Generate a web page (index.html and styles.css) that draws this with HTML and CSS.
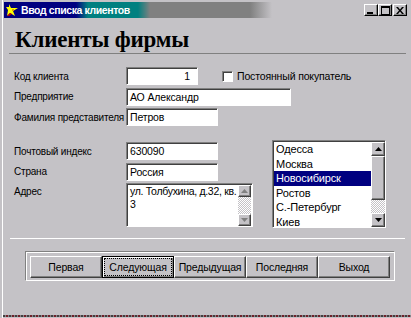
FILE: index.html
```html
<!DOCTYPE html>
<html lang="ru">
<head>
    <meta charset="UTF-8">
    <title>Ввод списка клиентов</title>
    <link rel="stylesheet" href="styles.css">
</head>
<body>
<div class="window">

    <!-- Title bar -->
    <div class="titlebar">
        <svg class="app-icon" width="13" height="13" viewBox="0 0 13 13">
            <polygon points="3,0 5,4 12,4 7,7 9,12 4,9 1,12 2,6 0,3 3,3" fill="#ffff00"/>
            <polygon points="1,12 4,9 6,10 3,12" fill="#c00000"/>
            <rect x="6" y="5" width="2" height="2" fill="#e0a000"/>
        </svg>
        <span class="title">Ввод списка клиентов</span>
        <div class="win-buttons">
            <span class="wbtn">
                <svg width="8" height="8" viewBox="0 0 8 8"><rect x="0" y="6" width="6" height="2" fill="#000"/></svg>
            </span>
            <span class="wbtn">
                <svg width="9" height="9" viewBox="0 0 9 9"><path d="M0 0H9V9H0Z M1 2V8H8V2Z" fill="#000" fill-rule="evenodd"/></svg>
            </span>
            <span class="wbtn close">
                <svg width="8" height="7" viewBox="0 0 8 7"><path d="M0 0h2l2 2.5L6 0h2L5 3.5 8 7H6L4 4.5 2 7H0l3-3.5z" fill="#000"/></svg>
            </span>
        </div>
    </div>

    <div class="content">
        <h1>Клиенты фирмы</h1>
        <div class="rule"></div>

        <!-- Client -->
        <div class="form-top">
            <div class="row">
                <span class="lbl">Код клиента</span>
                <div class="field w-code num">1</div>
                <span class="check"><span class="box"></span>Постоянный покупатель</span>
            </div>
            <div class="row">
                <span class="lbl">Предприятие</span>
                <div class="field w-firm">АО Александр</div>
            </div>
            <div class="row">
                <span class="lbl">Фамилия представителя</span>
                <div class="field w-short">Петров</div>
            </div>
        </div>

        <!-- Address -->
        <div class="form-bottom">
            <div class="addr">
                <div class="row">
                    <span class="lbl">Почтовый индекс</span>
                    <div class="field w-short">630090</div>
                </div>
                <div class="row">
                    <span class="lbl">Страна</span>
                    <div class="field w-short">Россия</div>
                </div>
                <div class="row tall">
                    <span class="lbl">Адрес</span>
                    <div class="field memo">
                        <div class="memo-text">ул. Толбухина, д.32, кв.<br>3</div>
                        <div class="vscroll">
                            <span class="sbtn off">
                                <svg width="7" height="4" viewBox="0 0 7 4"><path d="M3.5 0L7 4H0z" fill="#808080"/></svg>
                            </span>
                            <span class="track"></span>
                            <span class="sbtn off">
                                <svg width="7" height="4" viewBox="0 0 7 4"><path d="M0 0H7L3.5 4z" fill="#808080"/></svg>
                            </span>
                        </div>
                    </div>
                </div>
            </div>

            <div class="listbox">
                <div class="items">
                    <div class="item">Одесса</div>
                    <div class="item">Москва</div>
                    <div class="item sel">Новосибирск</div>
                    <div class="item">Ростов</div>
                    <div class="item">С.-Петербург</div>
                    <div class="item">Киев</div>
                </div>
                <div class="vscroll">
                    <span class="sbtn">
                        <svg width="7" height="4" viewBox="0 0 7 4"><path d="M3.5 0L7 4H0z" fill="#000"/></svg>
                    </span>
                    <span class="thumb"></span>
                    <span class="track"></span>
                    <span class="sbtn">
                        <svg width="7" height="4" viewBox="0 0 7 4"><path d="M0 0H7L3.5 4z" fill="#000"/></svg>
                    </span>
                </div>
            </div>
        </div>

        <div class="rule-light"></div>

        <!-- Navigation buttons -->
        <div class="nav">
            <button class="btn">Первая</button>
            <button class="btn focus"><span>Следующая</span></button>
            <button class="btn">Предыдущая</button>
            <button class="btn">Последняя</button>
            <button class="btn">Выход</button>
        </div>
    </div>

    <div class="bottom-edge"></div>
</div>
</body>
</html>
```

FILE: styles.css
```css
body {
    margin: 0;
    background: #c4c2c6;
    font-family: "Liberation Sans", Arial, sans-serif;
    font-size: 10.5px;
    letter-spacing: -0.15px;
    color: #000;
}

.window {
    margin-left: 2px;
    border-left: 1px solid #fff;
    height: 318px;
    box-sizing: border-box;
    display: flex;
    flex-direction: column;
}

/* Title bar */
.titlebar {
    margin: 2px 2px 0 1px;
    height: 16px;
    display: flex;
    align-items: center;
    background: linear-gradient(90deg, #000080 0, #000080 72px, #008080 84px, #008080 134px, #808080 146px, #808080 246px, #c4c2c6 268px);
}

.app-icon {
    margin-left: 2px;
}

.title {
    margin-left: 2px;
    color: #fff;
    font-weight: bold;
    font-size: 10.5px;
    letter-spacing: -0.4px;
}

.win-buttons {
    margin-left: auto;
    margin-right: 2px;
    display: flex;
}

.wbtn {
    width: 14px;
    height: 12px;
    box-sizing: border-box;
    background: #c4c2c6;
    border: 1px solid;
    border-color: #fff #000 #000 #fff;
    box-shadow: inset -1px -1px #808080;
    display: flex;
    align-items: center;
    justify-content: center;
}

.wbtn.close {
    margin-left: 1px;
}

/* Content */
.content {
    padding: 0 4px 0 6px;
}

h1 {
    margin: 10px 0 0 6px;
    font-family: "Liberation Serif", "Times New Roman", serif;
    font-weight: bold;
    font-size: 23px;
    line-height: 24px;
    letter-spacing: -0.2px;
}

.rule {
    height: 1px;
    width: 397px;
    margin-top: 1px;
    background: #808080;
}

.rule-light {
    height: 1px;
    width: 395px;
    margin: 10px 0 0 1px;
    background: #fff;
}

.form-top {
    margin: 13px 0 0 5px;
    display: flex;
    flex-direction: column;
    gap: 2.5px;
}

.row {
    display: flex;
    align-items: center;
    height: 18px;
}

.row.tall {
    align-items: flex-start;
    height: 44px;
}

.row.tall .lbl {
    padding-top: 3px;
}

.lbl {
    width: 112px;
    white-space: nowrap;
    font-size: 10px;
    letter-spacing: -0.2px;
}

.field {
    height: 18px;
    box-sizing: border-box;
    background: #fff;
    border: 1px solid;
    border-color: #808080 #fff #fff #808080;
    box-shadow: inset 1px 1px #404040;
    padding: 0 3px;
    line-height: 16px;
    white-space: nowrap;
    overflow: hidden;
}

.w-code { width: 72px; }
.w-firm { width: 165px; }
.w-short { width: 92px; }

.num {
    text-align: right;
    padding-right: 7px;
}

.check {
    margin-left: 24px;
    display: flex;
    align-items: center;
    gap: 4px;
}

.box {
    width: 11px;
    height: 11px;
    box-sizing: border-box;
    background: #fff;
    border: 1px solid;
    border-color: #808080 #fff #fff #808080;
    box-shadow: inset 1px 1px #404040;
}

.form-bottom {
    margin: 15px 0 0 5px;
    display: flex;
}

.addr {
    width: 239px;
    padding-top: 1px;
    display: flex;
    flex-direction: column;
    gap: 2.5px;
}

.memo {
    width: 127px;
    height: 44px;
    padding: 0;
    display: flex;
}

.memo-text {
    flex: 1;
    padding: 1px 0 0 3px;
    line-height: 13px;
    overflow: hidden;
    letter-spacing: -0.3px;
}

/* Scrollbars */
.vscroll {
    width: 14px;
    display: flex;
    flex-direction: column;
}

.memo .vscroll {
    width: 13px;
    padding: 1px 1px 0 0;
}

.sbtn {
    height: 14px;
    box-sizing: border-box;
    background: #c4c2c6;
    border: 1px solid;
    border-color: #fff #404040 #404040 #fff;
    box-shadow: inset -1px -1px #808080;
    display: flex;
    align-items: center;
    justify-content: center;
}

.sbtn.off {
    height: 12px;
}

.thumb {
    height: 44px;
    box-sizing: border-box;
    background: #c4c2c6;
    border: 1px solid;
    border-color: #fff #404040 #404040 #fff;
    box-shadow: inset -1px -1px #808080;
}

.track {
    flex: 1;
    background: repeating-conic-gradient(#fff 0 25%, #c4c2c6 0 50%) 0 0 / 2px 2px;
}

/* List of cities */
.listbox {
    margin-left: 19px;
    margin-top: -1px;
    width: 114px;
    height: 88px;
    box-sizing: border-box;
    background: #fff;
    border: 1px solid;
    border-color: #808080 #fff #fff #808080;
    box-shadow: inset 1px 1px #404040;
    padding: 1px 0 0 1px;
    display: flex;
}

.items {
    flex: 1;
    overflow: hidden;
}

.item {
    height: 14.5px;
    line-height: 14.5px;
    padding-left: 2px;
    white-space: nowrap;
    font-size: 11px;
}

.item.sel {
    background: #000080;
    color: #fff;
}

/* Navigation */
.nav {
    margin: 12px 0 0 16px;
    width: 370px;
    height: 30px;
    box-sizing: border-box;
    border: 1px solid;
    border-color: #808080 #fff #fff #808080;
    box-shadow: inset 1px 1px #fff;
    padding: 4px 4px 2px 4px;
    display: flex;
}

.btn {
    flex: 1;
    height: 22px;
    box-sizing: border-box;
    margin: 0;
    padding: 0;
    background: #c4c2c6;
    border: 1px solid;
    border-color: #fff #404040 #404040 #fff;
    box-shadow: inset -1px -1px #808080;
    font-family: "Liberation Sans", Arial, sans-serif;
    font-size: 10.5px;
    letter-spacing: -0.15px;
    color: #000;
}

.btn.focus {
    border-color: #000;
    box-shadow: inset 1px 1px #fff, inset -1px -1px #808080;
}

.btn.focus span {
    display: block;
    margin: 1px 2px;
    padding: 2px 0;
    outline: 1px dotted #000;
}

.bottom-edge {
    margin-top: auto;
    margin-bottom: 1px;
    height: 2px;
    background: repeating-linear-gradient(90deg, #404040 0 2px, #8c8288 2px 3px, #702028 3px 5px, #8c8288 5px 6px);
}
```
